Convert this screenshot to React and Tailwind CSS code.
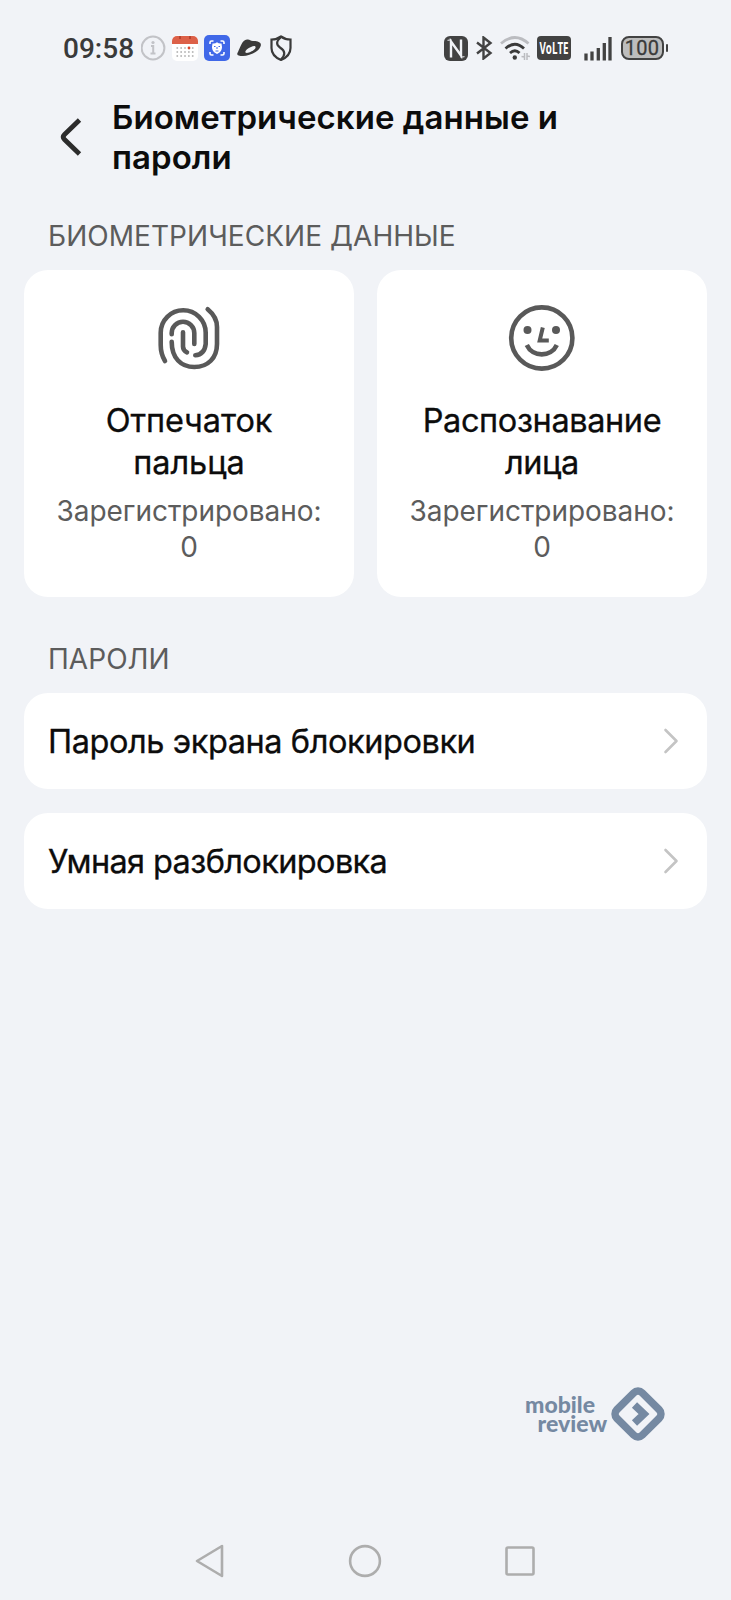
import React from "react";

function StatusBar() {
  return (
    <header className="flex h-24 items-center justify-between pr-[63px] pl-[63px] text-[#3a3a3a]">
      <div className="flex items-center">
        <span className="w-[78px] pt-[2px] font-['Roboto',sans-serif] text-[28px] leading-none font-medium">09:58</span>
        <svg width="25" height="26" viewBox="0 0 25 26" fill="none">
          <circle cx="12" cy="13" r="11.4" stroke="#c2c3c7" strokeWidth="2" />
          <circle cx="12" cy="7.500" r="1.600" fill="#c2c3c7" />
          <path d="M10 11h2.200v8M9.500 18.500h5" stroke="#c2c3c7" strokeWidth="2" />
        </svg>
        <svg className="ml-1.5" width="26" height="26" viewBox="0 0 26 26">
          <rect y="0.5" width="26" height="25.5" rx="5" fill="#fff" />
          <path d="M0 9V6a5 5 0 0 1 5-5h16a5 5 0 0 1 5 5v3z" fill="#dc6048" />
          <path d="M8 1v3M18 1v3" stroke="#b8442f" strokeWidth="2" />
          <path d="M4.500 13h17M4.500 17h17M4.500 21h17" stroke="#aaa" strokeWidth="1.600" strokeDasharray="1.6 2.25" />
          <circle cx="17" cy="13" r="1.400" fill="#d9452c" />
        </svg>
        <svg className="ml-1.5" width="26" height="26" viewBox="0 0 26 26" fill="none">
          <rect width="26" height="26" rx="5" fill="#4068e8" />
          <path d="M6 9V7.500Q6 6 7.500 6H9.500M16.500 6h2Q20 6 20 7.500V9M6 17v1.500Q6 20 7.500 20H9.500M16.500 20h2Q20 20 20 18.500V17" stroke="#fff" strokeWidth="1.600" />
          <path d="M8.500 8.500Q11 9 13 7.300Q15 9 17.500 8.500Q19 15 15.500 17.500L13 19l-2.500-1.500Q7 15 8.500 8.500z" fill="#fff" />
          <path d="M10 11.500h1.500M14.500 11.500H16M13 12v2M11.500 16h3" stroke="#4068e8" strokeWidth="1" />
        </svg>
        <svg className="ml-[7px]" width="25" height="20" viewBox="0 0 25 20">
          <path fillRule="evenodd" d="M1 14C3 10 5 2 10 1.500C13 1 13 3 16 3C20 3 25 4 23.700 8C22 14 12 18 6 18C1 18-1 17 1 14zM8.500 14.500C10 16 17 13 18.500 10C19 7.500 16.500 7.800 14 9C10.500 10.500 7.500 13 8.500 14.500z" fill="#3a3a3a" />
        </svg>
        <svg className="ml-[8px]" width="22" height="26" viewBox="0 0 22 26" fill="none" stroke="#3a3a3a" strokeWidth="2.200">
          <path d="M11 1.500Q15 4.500 20.500 4.500V13Q20.500 21 11 25Q1.500 21 1.500 13V4.500Q7 4.500 11 1.500z" />
          <path d="M11 2C6 6.500 6 9.500 10 12.500C15.500 16 15.500 20 11 24.500" />
        </svg>
      </div>
      <div className="flex items-center">
        <svg width="24" height="25" viewBox="0 0 24 25" fill="none">
          <rect width="24" height="25" rx="6" fill="#424242" />
          <path d="M7 21.500V5.500L17 19.500V3.500" stroke="#f1f3f7" strokeWidth="2.400" />
          <path d="M3.500 4.300L7.500 3.800M20.500 20.700L16.500 21.200" stroke="#f1f3f7" strokeWidth="1" />
        </svg>
        <svg className="ml-[7px]" width="18" height="24" viewBox="0 0 18 24" fill="none" stroke="#424242" strokeWidth="2.400">
          <path d="M2 6.500L15.500 17L8.500 22.500V1.500L15.500 7L2 17.500" />
        </svg>
        <svg className="ml-[7px]" width="31" height="26" viewBox="0 0 31 26" fill="none" strokeWidth="2.800">
          <path d="M1 8.500Q15 -3.500 28.500 8.500" stroke="#bbbcc0" />
          <path d="M5.500 13.500Q15 5 24 13.500M10 18Q15 13.500 19.500 18" stroke="#3a3a3a" />
          <circle cx="14.800" cy="22.500" r="2.200" fill="#3a3a3a" />
          <path d="M24.500 18v7M24.500 22l-3-.5M27 18v7M27 21l3 .5" stroke="#bbbcc0" strokeWidth="1.500" />
        </svg>
        <div className="ml-[6px] flex h-[24px] w-[34px] items-center justify-center rounded-[4px] bg-[#424242]">
          <svg width="34" height="24" viewBox="0 0 34 24" className="overflow-visible">
            <text x="2.500" y="17.500" textLength="29" lengthAdjust="spacingAndGlyphs" className="fill-white font-['Open_Sans',sans-serif] text-[15.500px] font-bold">VoLTE</text>
          </svg>
        </div>
        <svg className="ml-[13px]" width="28" height="25" viewBox="0 0 28 25" stroke="#424242" strokeWidth="3.300">
          <path d="M2 17.500V24.500M8 15.500v9M14.300 12v12.500M20.300 7v17.500M26 1v23.500" />
        </svg>
        <div className="ml-[9px] flex h-[24px] w-[43px] items-center justify-center rounded-[8px] border-2 border-[#424242] bg-[#bdbdbd] font-['Roboto',sans-serif] text-[20px] leading-[20px] tracking-[0.2px] [-webkit-text-stroke:0.3px_#3a3a3a]">100</div>
        <div className="ml-[2px] h-2 w-[2.500px] rounded bg-[#424242]" />
      </div>
    </header>
  );
}

function BioCard({ icon, lines, tracking }) {
  return (
    <section className="flex h-[327px] flex-1 flex-col items-center rounded-[24px] bg-white pt-[34px] text-center">
      {icon}
      <h3 className={`mt-[28px] text-[32.500px] leading-[42px] text-[#0c0c0c] [-webkit-text-stroke:0.3px_#0c0c0c] ${tracking}`}>
        {lines[0]}
        <br />
        {lines[1]}
      </h3>
      <p className="mt-[9px] text-[28px] leading-[36px] tracking-[-0.05px] text-[#5c5c5c]">
        Зарегистрировано:
        <br />0
      </p>
    </section>
  );
}

function Row({ children, tracking }) {
  return (
    <div className="flex h-24 items-center justify-between rounded-[24px] bg-white pr-[28px] pl-6 text-[32.500px] text-[#0c0c0c] [-webkit-text-stroke:0.3px_#0c0c0c]">
      <span className={`pt-[3px] ${tracking}`}>{children}</span>
      <svg width="16" height="26" viewBox="0 0 16 26" fill="none" stroke="#c4c4c4" strokeWidth="2.600" strokeLinecap="round" strokeLinejoin="round">
        <path d="M2.500 2L13.500 13L2.500 24" />
      </svg>
    </div>
  );
}

const fingerprint = (
  <svg width="68" height="68" viewBox="0 0 68 68" fill="none" stroke="#595959" strokeWidth="4.600" strokeLinecap="round">
    <path d="M10 57Q5.700 50 5.700 41V28.800A22.500 22.500 0 0 1 50.700 28.800V40Q49.500 50.500 40.300 51.300" />
    <path d="M16.700 30.300V29A11.300 11.300 0 0 1 39.300 29V40" />
    <path d="M28 28.300V42.500Q28 46.500 32 48.300" />
    <path d="M16.700 37.700C16.700 54 26 63 39.300 63C53 63 62 54 62 40V23Q62 13 52.700 5.300" />
  </svg>
);

const face = (
  <svg width="68" height="68" viewBox="0 0 68 68" fill="none" stroke="#595959" strokeWidth="4.600">
    <circle cx="33.800" cy="34" r="30.600" />
    <circle cx="19.500" cy="26" r="4" fill="#595959" stroke="none" />
    <circle cx="48" cy="26" r="4" fill="#595959" stroke="none" />
    <path d="M34.800 23.500L31.700 36.500H40.800" strokeWidth="4" />
    <path d="M18.800 41C24.500 53.500 43 53.500 48.800 41" />
  </svg>
);

export default function App() {
  return (
    <div className="flex h-[1600px] w-[731px] flex-col bg-[#f1f3f7] font-['Inter','Noto_Sans',sans-serif]">
      <StatusBar />
      <div className="flex h-[81px] items-center pl-[60px]">
        <svg width="22" height="38" viewBox="0 0 22 38" fill="none" stroke="#2c2c2c" strokeWidth="4.800">
          <path d="M19.500 2L4.500 16.500Q2 19 4.500 21.500L19.500 36" />
        </svg>
        <h1 className="ml-[30px] text-[33px] leading-[40px] font-semibold tracking-[0.05px] text-[#0c0c0c]">
          Биометрические данные и
          <br />
          пароли
        </h1>
      </div>
      <h2 className="mt-[41px] ml-[48px] text-[28px] leading-[36px] tracking-[0.05px] text-[#5c5c5c]">БИОМЕТРИЧЕСКИЕ ДАННЫЕ</h2>
      <div className="mt-4 flex gap-[23px] px-6">
        <BioCard icon={fingerprint} lines={["Отпечаток", "пальца"]} tracking="tracking-[-0.1px]" />
        <BioCard icon={face} lines={["Распознавание", "лица"]} tracking="tracking-[-0.4px]" />
      </div>
      <h2 className="mt-[44px] ml-[48px] text-[28px] leading-[36px] tracking-[0.05px] text-[#5c5c5c]">ПАРОЛИ</h2>
      <div className="mt-4 flex flex-col gap-6 px-6">
        <Row tracking="tracking-[-0.43px]">Пароль экрана блокировки</Row>
        <Row tracking="tracking-[-0.63px]">Умная разблокировка</Row>
      </div>
      <footer className="mt-auto">
        <div className="flex items-center justify-end pr-[66px] text-[#7589a2]">
          <div className="flex flex-col items-end font-['Lato',sans-serif] text-[23px] leading-[19px] font-black">
            <span className="mr-[12px]">mobile</span>
            <span>review</span>
          </div>
          <svg className="ml-[4px]" width="54" height="54" viewBox="0 0 54 54" fill="none" stroke="#7589a2">
            <rect x="9" y="9" width="36" height="36" rx="6" transform="rotate(45 27 27)" strokeWidth="7.500" />
            <path d="M23.500 18L33 27L23.500 36" strokeWidth="7.500" />
          </svg>
        </div>
        <nav className="mt-[103px] mb-[22px] flex items-center pl-[195px]">
          <svg width="29" height="34" viewBox="0 0 29 34" fill="none" stroke="#adadad" strokeWidth="2.600" strokeLinejoin="round">
            <path d="M27 2V32L2 17z" />
          </svg>
          <svg className="ml-[124px]" width="34" height="34" viewBox="0 0 34 34" fill="none" stroke="#adadad" strokeWidth="2.600">
            <circle cx="17" cy="17" r="14.900" />
          </svg>
          <svg className="ml-[123px]" width="30" height="30" viewBox="0 0 30 30" fill="none" stroke="#adadad" strokeWidth="2.600">
            <rect x="1.500" y="1.500" width="27" height="27" rx="1.500" />
          </svg>
        </nav>
      </footer>
    </div>
  );
}
